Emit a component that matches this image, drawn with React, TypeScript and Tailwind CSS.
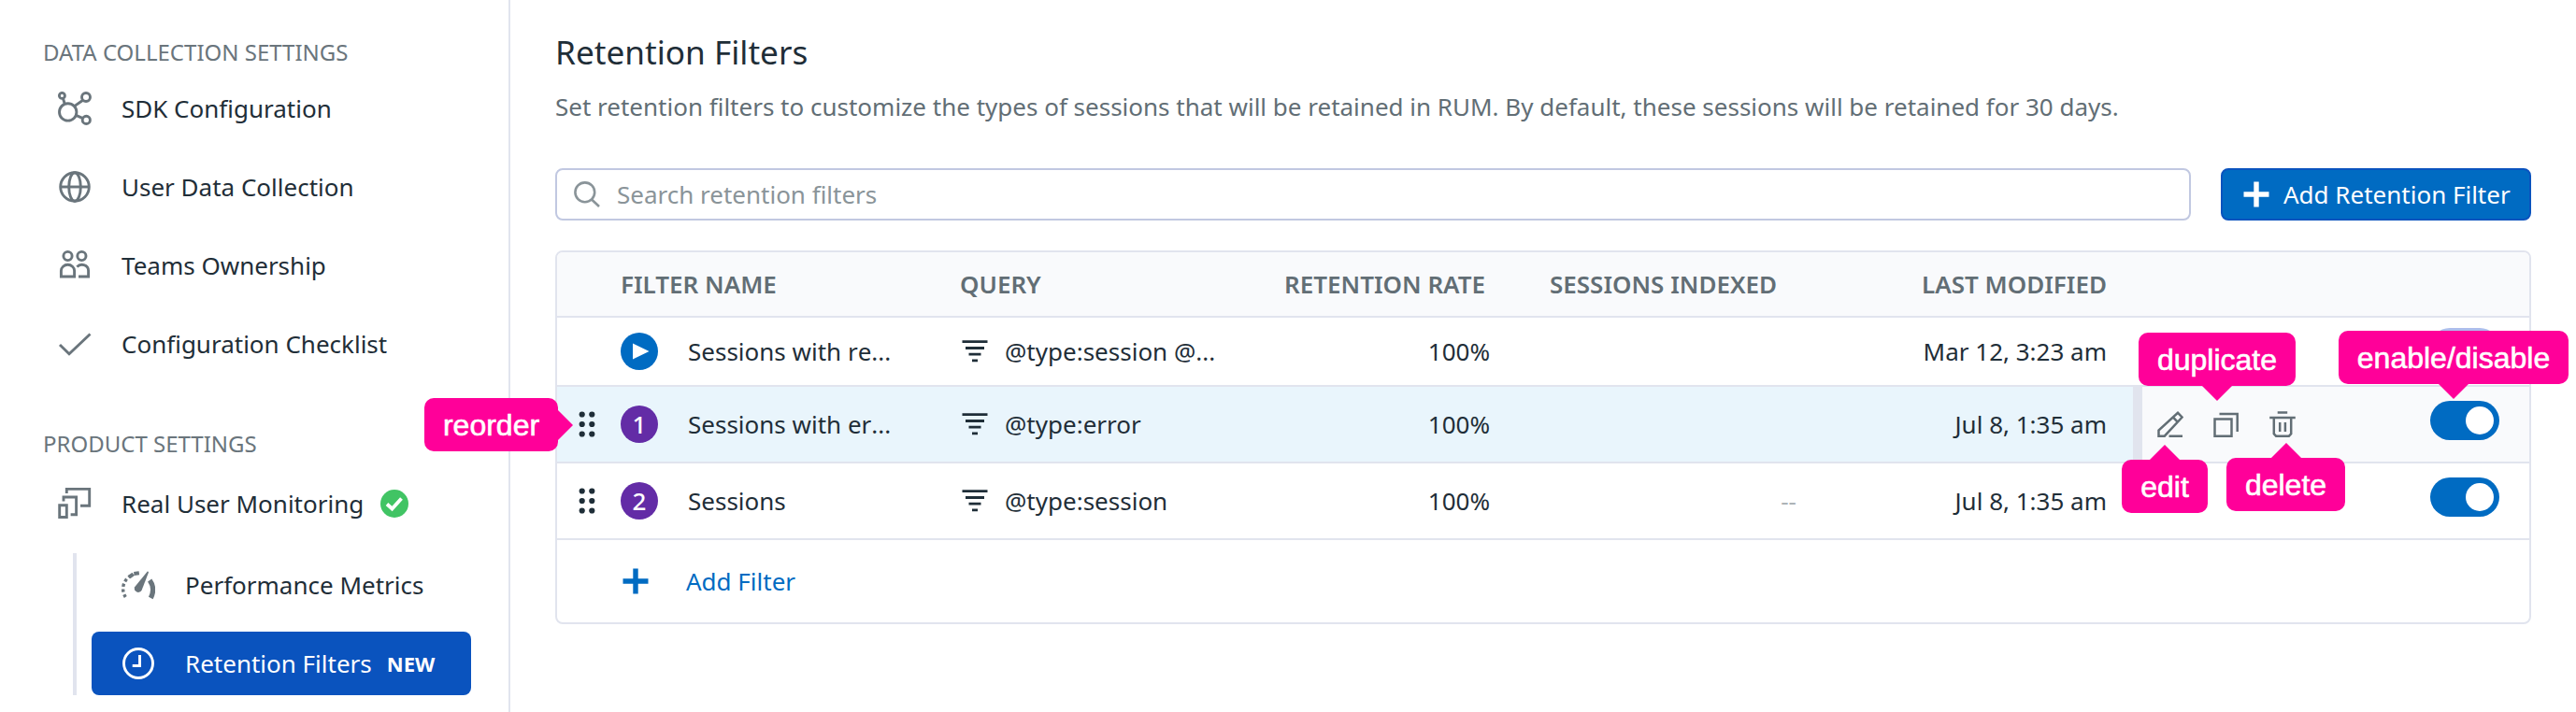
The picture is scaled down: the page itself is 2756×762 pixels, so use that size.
import React from "react";

type IconProps = { className?: string };

const stroke = { fill: "none", stroke: "currentColor", strokeWidth: 2.9 } as const;

const Network = ({ className }: IconProps) => (
  <svg viewBox="0 0 36 36" className={className} {...stroke}>
    <circle cx="10.7" cy="21.9" r="9.2" />
    <circle cx="4.4" cy="4.4" r="3" />
    <circle cx="30" cy="6" r="4.500" />
    <circle cx="30.3" cy="30.4" r="4.100" />
    <path d="M5.500 7.500 7.200 13M17.600 15.600 26.700 9.200M19.300 25.400 26.700 28.600" />
  </svg>
);

const Globe = ({ className }: IconProps) => (
  <svg viewBox="0 0 36 36" className={className} {...stroke}>
    <circle cx="18" cy="18" r="15.300" />
    <ellipse cx="18" cy="18" rx="6.300" ry="15.300" />
    <path d="M2.500 18h31" />
  </svg>
);

const Teams = ({ className }: IconProps) => (
  <svg viewBox="0 0 36 36" className={className} {...stroke}>
    <circle cx="10.500" cy="8" r="4.600" />
    <circle cx="25.400" cy="8" r="4.600" />
    <path d="M3.400 30V23.800a7.100 6.500 0 0 1 14.200 0V30z" />
    <path d="M20.400 19.600C24 15.500 32.600 17 32.600 23.800V30H22" />
  </svg>
);

const Check = ({ className }: IconProps) => (
  <svg viewBox="0 0 36 36" className={className} {...stroke}>
    <path d="M2 19 12 28.700 34.500 7.500" />
  </svg>
);

const Devices = ({ className }: IconProps) => (
  <svg viewBox="0 0 36 36" className={className} {...stroke}>
    <path d="M9.300 7V2.400h24.400V20.300H24" />
    <path d="M6 15.500V11h13.600v18.800h-6" />
    <path d="M1.700 19.700h7.600V32.500H1.700z" />
  </svg>
);

const Gauge = ({ className }: IconProps) => (
  <svg viewBox="0 0 36 32" className={className} fill="none" stroke="currentColor">
    <path d="M4.300 29A16 16 0 0 1 10.200 6" strokeWidth="3.400" strokeDasharray="3.200 2.600" />
    <path d="M8.200 7.600 12.600 4.400M13.300 4 19.800 3.100" strokeWidth="4" strokeDasharray="5.600 2" />
    <path d="M30.200 11C34.500 17 34.600 23.500 31.300 30" strokeWidth="5.200" />
    <path d="M28 1.200 29 2.400 21.700 21.400a4.100 4.100 0 0 1-7.600-3.200z" fill="currentColor" stroke="none" />
  </svg>
);

const Clock = ({ className }: IconProps) => (
  <svg viewBox="0 0 36 36" className={className} {...stroke}>
    <circle cx="18" cy="18" r="15.500" />
    <path d="M19.500 9v11.500H11.700" />
  </svg>
);

const Verified = ({ className }: IconProps) => (
  <svg viewBox="0 0 30 30" className={className}>
    <circle cx="15" cy="15" r="15" fill="#41c464" />
    <path d="M7 15.500 12.500 20.500 22.500 9.500" fill="none" stroke="#fff" strokeWidth="3.800" />
  </svg>
);

const Search = ({ className }: IconProps) => (
  <svg viewBox="0 0 28 28" className={className} fill="none" stroke="currentColor" strokeWidth="2.600">
    <circle cx="11.800" cy="11.800" r="10.400" />
    <path d="M19 19.500 27 27" />
  </svg>
);

const Plus = ({ className }: IconProps) => (
  <svg viewBox="0 0 28 28" className={className} fill="none" stroke="currentColor" strokeWidth="5.400">
    <path d="M14 .5v27M.5 14h27" />
  </svg>
);

const Lines = ({ className }: IconProps) => (
  <svg viewBox="0 0 28 24" className={className} fill="none" stroke="currentColor" strokeWidth="2.800">
    <path d="M.5 1.700h27M4 8.500h20M7.500 15.200h13M11 21.800h6" />
  </svg>
);

const Grip = ({ className }: IconProps) => (
  <svg viewBox="0 0 18 28" className={className} fill="currentColor">
    {[3.5, 14, 24.5].map((y) => (
      <React.Fragment key={y}>
        <circle cx="3.700" cy={y} r="3.100" />
        <circle cx="14.300" cy={y} r="3.100" />
      </React.Fragment>
    ))}
  </svg>
);

const Pencil = ({ className }: IconProps) => (
  <svg viewBox="0 0 28 28" className={className} fill="none" stroke="currentColor" strokeWidth="2.500">
    <path d="M1.500 26.700V20.500L22 1.800 26.600 6.500 7.800 26.700zM16.800 6.400 21.500 11.400" />
    <path d="M12.500 26.700H27" />
  </svg>
);

const Copy = ({ className }: IconProps) => (
  <svg viewBox="0 0 28 28" className={className} fill="none" stroke="currentColor" strokeWidth="2.500">
    <path d="M1.500 8.600h18v18.100H1.500z" />
    <path d="M6.500 2.900h19.200V22" />
  </svg>
);

const Trash = ({ className }: IconProps) => (
  <svg viewBox="0 0 28 28" className={className} fill="none" stroke="currentColor" strokeWidth="2.500">
    <path d="M8.700 1.400h10.500M.2 6.900h27.600M4.800 7v17.300l2.300 2.400h13.800l2.300-2.400V7" />
    <path d="M11.200 12v10M16.900 12v10" />
  </svg>
);

const Item = ({ icon, label, children }: { icon: React.ReactNode; label: string; children?: React.ReactNode }) => (
  <a className="flex h-[84px] items-center pl-[62px]">
    <span className="flex w-[68px] items-center text-[#6a757c]">{icon}</span>
    <span>{label}</span>
    {children}
  </a>
);

const Toggle = ({ muted }: { muted?: boolean }) => (
  <span
    className={`mb-2 flex h-[42px] w-[74px] items-center justify-end rounded-full pr-[6px] ${muted ? "bg-[#aebdec]" : "bg-[#006bc2]"}`}
  >
    <span className="size-[30px] rounded-full bg-white" />
  </span>
);

type Direction = "up" | "down" | "right";

const pointers: Record<Direction, string> = {
  up: "-top-4 h-4 w-8 -translate-x-1/2 [clip-path:polygon(50%_0,100%_100%,0_100%)]",
  down: "-bottom-4 h-4 w-8 -translate-x-1/2 [clip-path:polygon(0_0,100%_0,50%_100%)]",
  right: "-right-4 top-[13px] h-8 w-4 [clip-path:polygon(0_0,100%_50%,0_100%)]",
};

const Callout = ({ label, place, dir, tip = "" }: { label: string; place: string; dir: Direction; tip?: string }) => (
  <div
    className={`absolute flex h-[57px] items-center justify-center rounded-[10px] bg-[#ff0099] font-['Liberation_Sans',sans-serif] text-[32px] text-white ${place}`}
  >
    <span className="pt-px [-webkit-text-stroke:0.6px_white]">{label}</span>
    <span className={`absolute bg-[#ff0099] ${pointers[dir]} ${tip}`} />
  </div>
);

type Row = {
  badge: React.ReactNode;
  name: string;
  query: string;
  indexed: string;
  modified: string;
  height: string;
  active?: boolean;
  fixed?: boolean;
};

const rows: Row[] = [
  {
    badge: (
      <svg viewBox="0 0 40 40" className="size-10" fill="#fff">
        <path d="M13 11.500 30.500 20 13 28.500z" />
      </svg>
    ),
    name: "Sessions with re...",
    query: "@type:session @...",
    indexed: "",
    modified: "Mar 12, 3:23 am",
    height: "h-[74px]",
    fixed: true,
  },
  { badge: "1", name: "Sessions with er...", query: "@type:error", indexed: "", modified: "Jul 8, 1:35 am", height: "h-[82px]", active: true },
  { badge: "2", name: "Sessions", query: "@type:session", indexed: "--", modified: "Jul 8, 1:35 am", height: "h-[82px]" },
];

const FilterRow = ({ row }: { row: Row }) => (
  <div className={`flex items-stretch border-b-2 border-[#e1e4ee] ${row.height} ${row.active ? "bg-[#e9f5fc]" : ""}`}>
    <div className="flex w-[68px] items-center pl-[23px]">{!row.fixed && <Grip className="h-7 w-[18px]" />}</div>
    <div className="flex w-[365px] items-center">
      <span
        className={`flex size-10 items-center justify-center rounded-full font-medium text-white ${
          row.fixed ? "bg-[#006bc2]" : "bg-[#632ca6]"
        }`}
      >
        {row.badge}
      </span>
      <span className="ml-8 [font-kerning:none]">{row.name}</span>
    </div>
    <div className="flex w-[366px] items-center">
      <Lines className="h-6 w-7" />
      <span className="ml-[18px]">{row.query}</span>
    </div>
    <div className="flex w-[199px] items-center justify-end">100%</div>
    <div className="flex w-[328px] items-center justify-end text-[#adb3b7]">{row.indexed}</div>
    <div className="flex w-[332px] items-center justify-end">{row.modified}</div>
    <div
      className={`ml-auto flex w-[424px] items-center ${row.active ? "border-l-[10px] border-[#e1e4ee] bg-[#f9fafc]" : "pl-[10px]"}`}
    >
      {row.active && (
        <div className="flex gap-8 pl-4 text-[#626e75]">
          <Pencil className="size-7" />
          <Copy className="size-7" />
          <Trash className="size-7" />
        </div>
      )}
      <div className="ml-auto pr-8">
        <Toggle muted={row.fixed} />
      </div>
    </div>
  </div>
);

export default function App() {
  return (
    <div className="relative flex h-[762px] w-[2756px] overflow-hidden bg-white font-['Noto_Sans',sans-serif] text-[26px] leading-9 text-[#1f2e38]">
      <nav className="flex w-[546px] shrink-0 flex-col border-r-2 border-[#e1e4ee] pt-[38px]">
        <h2 className="pl-[46px] text-2xl leading-9 text-[#6a757c]">DATA COLLECTION SETTINGS</h2>
        <Item icon={<Network className="size-9" />} label="SDK Configuration" />
        <Item icon={<Globe className="size-9" />} label="User Data Collection" />
        <Item icon={<Teams className="size-9" />} label="Teams Ownership" />
        <Item icon={<Check className="size-9" />} label="Configuration Checklist" />
        <h2 className="mb-1 mt-[47px] pl-[46px] text-2xl leading-9 text-[#6a757c]">PRODUCT SETTINGS</h2>
        <Item icon={<Devices className="size-9" />} label="Real User Monitoring">
          <Verified className="ml-[18px] size-[30px]" />
        </Item>
        <div className="ml-[78px] mt-[11px] flex h-[152px] flex-col border-l-4 border-[#e1e4ee] pl-4">
          <a className="flex h-[84px] items-center pb-4 pl-8">
            <Gauge className="mr-8 h-8 w-9 text-[#6a757c]" />
            Performance Metrics
          </a>
          <a className="flex h-[68px] w-[406px] items-center rounded-lg bg-[#0a53be] pl-8 text-white">
            <Clock className="mr-8 size-9" />
            Retention Filters
            <span className="ml-4 text-[22px] font-bold">NEW</span>
          </a>
        </div>
      </nav>

      <main className="flex w-[2162px] flex-col pl-12 pt-[31px]">
        <h1 className="text-[35.200px] leading-[48px]">Retention Filters</h1>
        <p className="mt-[17px] text-[#626e75]">
          Set retention filters to customize the types of sessions that will be retained in RUM. By default, these sessions will be retained
          for 30 days.
        </p>
        <div className="mt-12 flex gap-8">
          <div className="flex h-14 w-[1750px] items-center rounded-lg border-2 border-[#c1c8e1] pl-[18px] text-[#8a9499]">
            <Search className="mr-[18px] size-7" />
            Search retention filters
          </div>
          <button className="flex h-14 w-[332px] items-center rounded-lg border-2 border-[#0a53be] bg-[#006bc2] pl-[22px] text-white">
            <Plus className="mr-[15px] size-7" />
            Add Retention Filter
          </button>
        </div>

        <section className="mt-8 h-[400px] overflow-hidden rounded-lg border-2 border-[#e1e4ee]">
          <div className="flex h-[70px] items-center border-b-2 border-[#e1e4ee] bg-[#f9fafc] font-semibold text-[#626e75]">
            <span className="w-[431px] pl-[68px]">FILTER NAME</span>
            <span className="w-[347px]">QUERY</span>
            <span className="w-[284px]">RETENTION RATE</span>
            <span className="w-[398px]">SESSIONS INDEXED</span>
            <span>LAST MODIFIED</span>
          </div>
          {rows.map((row) => (
            <FilterRow key={row.name} row={row} />
          ))}
          <div className="flex h-[88px] items-center pl-[70px] text-[#006bc2]">
            <Plus className="mr-10 size-7" />
            Add Filter
          </div>
        </section>
      </main>

      <Callout label="reorder" place="left-[454px] top-[426px] w-[143px]" dir="right" />
      <Callout label="duplicate" place="left-[2288px] top-[356px] w-[168px]" dir="down" tip="left-[84px]" />
      <Callout label="enable/disable" place="left-[2502px] top-[354px] w-[246px]" dir="down" tip="left-[123px]" />
      <Callout label="edit" place="left-[2270px] top-[492px] w-[92px]" dir="up" tip="left-[46px]" />
      <Callout label="delete" place="left-[2382px] top-[490px] w-[127px]" dir="up" tip="left-[64px]" />
    </div>
  );
}
